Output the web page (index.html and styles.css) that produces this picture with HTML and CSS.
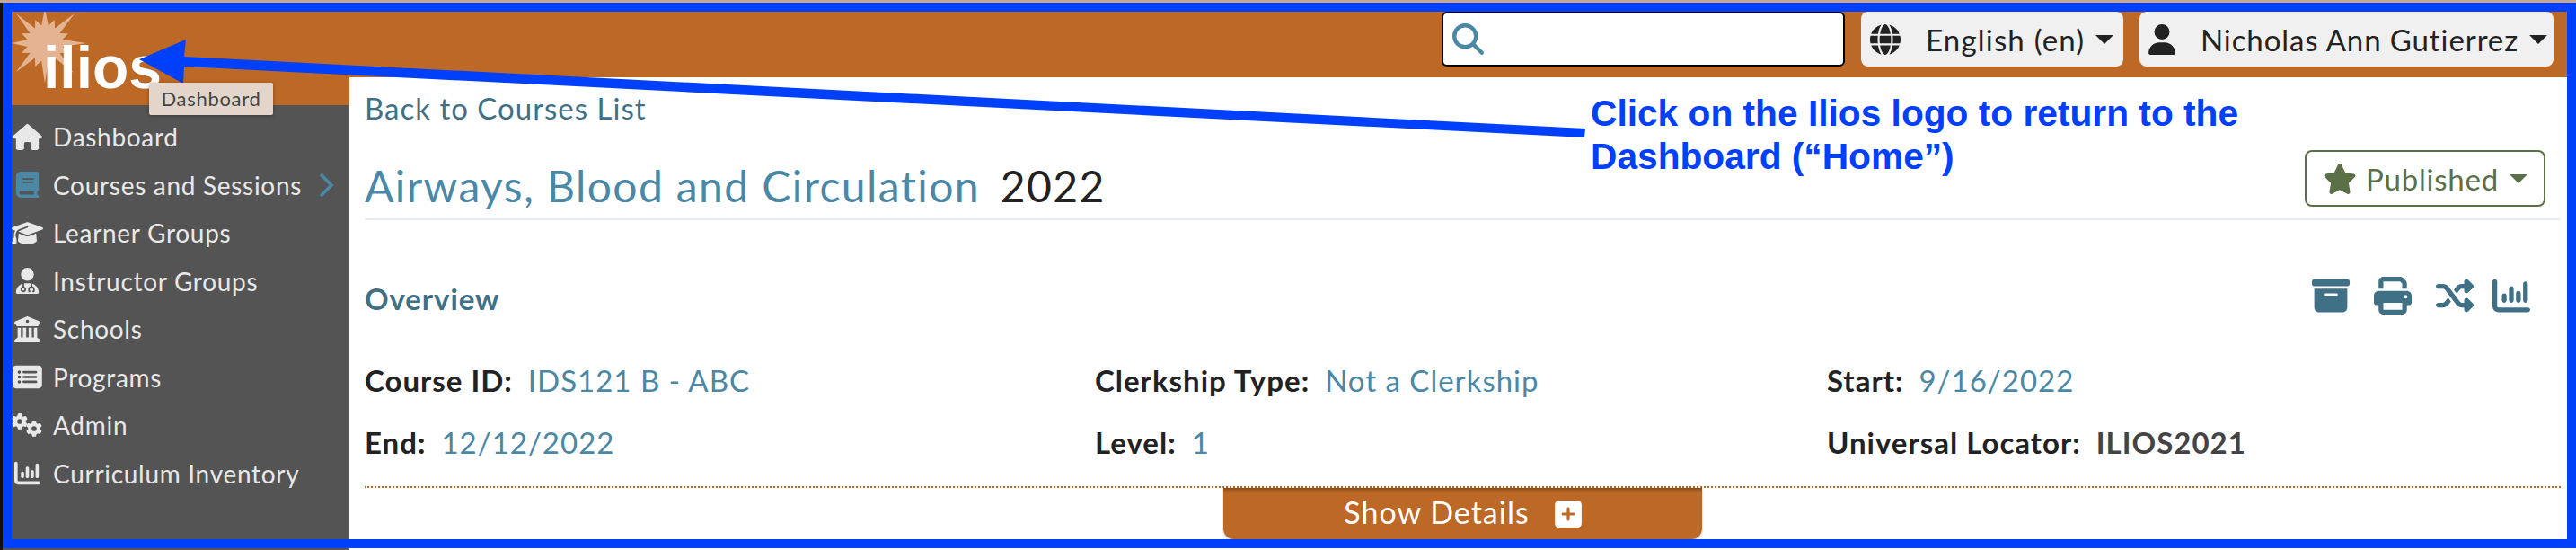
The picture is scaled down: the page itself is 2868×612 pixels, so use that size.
FILE: index.html
```html
<!DOCTYPE html>
<html lang="en">
<head>
<meta charset="utf-8">
<title>Ilios course overview</title>
<link rel="stylesheet" href="styles.css">
</head>
<body>
<div class="frame">
  <aside class="sidebar">
    <a class="logo">
      <svg class="sun" viewBox="-37 -35 90 90" aria-hidden="true"><path d="M46 0L19.6 3.9 25.9 10.7 16.6 11.1 32 33 11.1 16.6 10.7 25.9 3.9 19.6 0 45-3.9 19.6-10.7 25.9-11.1 16.6-32 32-16.6 11.1-25.9 10.7-19.6 3.9-37 0-19.6-3.9-25.9-10.7-16.6-11.1-32-33-11.1-16.6-10.7-25.9-3.9-19.6 0-38 3.9-19.6 10.7-25.9 11.1-16.6 33-33 16.6-11.1 25.9-10.7 19.6-3.9Z"/></svg>
      <span class="logo-text">ilios</span>
    </a>
    <div class="tooltip">Dashboard</div>
    <nav class="nav">
      <a class="nav-item"><svg class="nav-icon" viewBox="0 0 576 512"><path d="M575.8 255.5c0 18-15 32.1-32 32.1h-32l.7 160.2c0 2.7-.2 5.4-.5 8.1V472c0 22.1-17.9 40-40 40H456c-1.1 0-2.2 0-3.3-.1c-1.4 .1-2.8 .1-4.2 .1H416 392c-22.1 0-40-17.9-40-40V448 384c0-17.7-14.3-32-32-32H256c-17.7 0-32 14.3-32 32v64 24c0 22.1-17.9 40-40 40H160 128.1c-1.5 0-3-.1-4.5-.2c-1.2 .1-2.4 .2-3.6 .2H104c-22.1 0-40-17.9-40-40V360c0-.9 0-1.9 .1-2.8V287.6H32c-18 0-32-14-32-32.1c0-9 3-17 10-24L266.4 8c7-7 15-8 22-8s15 2 21 7L564.8 231.5c8 7 12 15 11 24z"/></svg>Dashboard</a>
      <a class="nav-item active"><svg class="nav-icon" viewBox="0 0 448 512"><path d="M96 0C43 0 0 43 0 96V416c0 53 43 96 96 96H384h32c17.7 0 32-14.3 32-32s-14.3-32-32-32V384c17.7 0 32-14.3 32-32V32c0-17.7-14.3-32-32-32H384 96zm0 384H352v64H96c-17.7 0-32-14.3-32-32s14.3-32 32-32zm32-240c0-8.8 7.2-16 16-16H336c8.8 0 16 7.2 16 16s-7.2 16-16 16H144c-8.8 0-16-7.2-16-16zm16 48H336c8.8 0 16 7.2 16 16s-7.2 16-16 16H144c-8.8 0-16-7.2-16-16s7.2-16 16-16z"/></svg>Courses and Sessions<svg class="chevron" viewBox="0 0 16 28"><path d="M2 2L14 14 2 26"/></svg></a>
      <a class="nav-item"><svg class="nav-icon" viewBox="0 0 640 512"><path d="M320 32c-8.1 0-16.1 1.4-23.7 4.1L15.8 137.4C6.3 140.9 0 149.9 0 160s6.3 19.1 15.8 22.6l57.9 20.9C57.3 229.3 48 259.8 48 291.9v28.1c0 28.4-10.8 57.7-22.3 80.8c-6.5 13-13.9 25.8-22.5 37.6C0 442.7-.9 448.3 .9 453.4s6 8.9 11.2 10.2l64 16c4.2 1.1 8.7 .3 12.4-2s6.3-6.1 7.1-10.4c8.6-42.8 4.3-81.2-2.1-108.7C90.3 344.3 86 329.8 80 316.5V291.9c0-30.2 10.2-58.7 27.9-81.5c12.9-15.5 29.6-28 49.2-35.7l157-61.7c8.2-3.2 17.5 .8 20.7 9s-.8 17.5-9 20.7l-157 61.7c-12.4 4.9-23.3 12.4-32.2 21.6l159.6 57.6c7.6 2.7 15.6 4.1 23.7 4.1s16.1-1.4 23.7-4.1L624.2 182.6c9.5-3.4 15.8-12.5 15.8-22.6s-6.3-19.1-15.8-22.6L343.7 36.1C336.1 33.4 328.1 32 320 32zM128 408c0 35.3 86 72 192 72s192-36.7 192-72L496.7 262.6 354.5 314c-11.1 4-22.8 6-34.5 6s-23.5-2-34.5-6L143.3 262.6 128 408z"/></svg>Learner Groups</a>
      <a class="nav-item"><svg class="nav-icon" viewBox="0 0 448 512"><path d="M224 256A128 128 0 1 0 224 0a128 128 0 1 0 0 256zm-96 55.2C54 332.9 0 401.3 0 482.3C0 498.7 13.3 512 29.7 512H418.3c16.4 0 29.7-13.3 29.7-29.7c0-81-54-149.4-128-171.1V362c27.6 7.1 48 32.2 48 62v40c0 8.8-7.2 16-16 16H336c-8.8 0-16-7.2-16-16s7.2-16 16-16V424c0-17.7-14.3-32-32-32s-32 14.3-32 32v24c8.8 0 16 7.2 16 16s-7.2 16-16 16H256c-8.8 0-16-7.2-16-16V424c0-29.8 20.4-54.9 48-62V304.9c-6-.6-12.1-.9-18.3-.9H178.3c-6.2 0-12.3 .3-18.3 .9v65.4c23.1 6.9 40 28.3 40 53.7c0 30.9-25.1 56-56 56s-56-25.1-56-56c0-25.4 16.9-46.8 40-53.7V311.2zM144 448a24 24 0 1 0 0-48 24 24 0 1 0 0 48z"/></svg>Instructor Groups</a>
      <a class="nav-item"><svg class="nav-icon" viewBox="0 0 512 512"><path d="M243.4 2.6l-224 96c-14 6-21.8 21-18.7 35.8S16.8 160 32 160v8c0 13.3 10.7 24 24 24H456c13.3 0 24-10.7 24-24v-8c15.2 0 28.3-10.7 31.3-25.6s-4.8-29.9-18.7-35.8l-224-96c-8-3.4-17.2-3.4-25.2 0zM128 224H64V420.3c-.6 .3-1.2 .7-1.8 1.1l-48 32c-11.7 7.8-17 22.4-12.9 35.9S17.9 512 32 512H480c14.1 0 26.5-9.2 30.6-22.7s-1.1-28.1-12.9-35.9l-48-32c-.6-.4-1.2-.7-1.8-1.1V224H384V416H344V224H280V416H232V224H168V416H128V224zM256 64a32 32 0 1 1 0 64 32 32 0 1 1 0-64z"/></svg>Schools</a>
      <a class="nav-item"><svg class="nav-icon" viewBox="0 0 576 512"><path fill-rule="evenodd" d="M64 32C28.7 32 0 60.7 0 96V416c0 35.3 28.7 64 64 64H512c35.3 0 64-28.7 64-64V96c0-35.3-28.7-64-64-64H64zM128 128a32 32 0 1 1 0 64 32 32 0 1 1 0-64zM128 224a32 32 0 1 1 0 64 32 32 0 1 1 0-64zM128 320a32 32 0 1 1 0 64 32 32 0 1 1 0-64zM216 136H456a24 24 0 0 1 0 48H216a24 24 0 0 1 0-48zM216 232H456a24 24 0 0 1 0 48H216a24 24 0 0 1 0-48zM216 328H456a24 24 0 0 1 0 48H216a24 24 0 0 1 0-48z"/></svg>Programs</a>
      <a class="nav-item"><svg class="nav-icon" viewBox="0 0 35 27"><path id="gear" transform="scale(.035)" d="M495.9 166.6c3.2 8.7 .5 18.4-6.4 24.6l-43.3 39.4c1.1 8.3 1.7 16.8 1.7 25.4s-.6 17.1-1.7 25.4l43.3 39.4c6.9 6.2 9.6 15.9 6.4 24.6c-4.4 11.9-9.7 23.3-15.8 34.3l-4.7 8.1c-6.6 11-14 21.4-22.1 31.2c-5.9 7.2-15.7 9.6-24.5 6.8l-55.7-17.7c-13.4 10.3-28.2 18.9-44 25.4l-12.5 57.1c-2 9.1-9 16.3-18.2 17.8c-13.8 2.3-28 3.5-42.5 3.5s-28.7-1.2-42.5-3.5c-9.2-1.5-16.2-8.7-18.2-17.8l-12.5-57.1c-15.8-6.5-30.6-15.1-44-25.4L83.1 425.9c-8.8 2.8-18.6 .3-24.5-6.8c-8.1-9.8-15.5-20.2-22.1-31.2l-4.7-8.1c-6.1-11-11.4-22.4-15.8-34.3c-3.2-8.7-.5-18.4 6.4-24.6l43.3-39.4C64.6 273.1 64 264.6 64 256s.6-17.1 1.7-25.4L22.4 191.2c-6.9-6.2-9.6-15.9-6.4-24.6c4.4-11.9 9.7-23.3 15.8-34.3l4.7-8.1c6.6-11 14-21.4 22.1-31.2c5.9-7.2 15.7-9.6 24.5-6.8l55.7 17.7c13.4-10.3 28.2-18.9 44-25.4l12.5-57.1c2-9.1 9-16.3 18.2-17.8C227.3 1.2 241.5 0 256 0s28.7 1.2 42.5 3.5c9.2 1.5 16.2 8.7 18.2 17.8l12.5 57.1c15.8 6.5 30.6 15.1 44 25.4l55.7-17.7c8.8-2.8 18.6-.3 24.5 6.8c8.1 9.8 15.5 20.2 22.1 31.2l4.7 8.1c6.1 11 11.4 22.4 15.8 34.3zM256 336a80 80 0 1 0 0-160 80 80 0 1 0 0 160z"/><use href="#gear" transform="translate(16 8)"/></svg>Admin</a>
      <a class="nav-item"><svg class="nav-icon" viewBox="0 0 512 512"><path d="M32 32c17.7 0 32 14.3 32 32V400c0 8.8 7.2 16 16 16H480c17.7 0 32 14.3 32 32s-14.3 32-32 32H80c-44.2 0-80-35.8-80-80V64C0 46.3 14.3 32 32 32zM160 224c17.7 0 32 14.3 32 32v64c0 17.7-14.3 32-32 32s-32-14.3-32-32V256c0-17.7 14.3-32 32-32zm128-64V320c0 17.7-14.3 32-32 32s-32-14.3-32-32V160c0-17.7 14.3-32 32-32s32 14.3 32 32zm64 32c17.7 0 32 14.3 32 32v96c0 17.7-14.3 32-32 32s-32-14.3-32-32V224c0-17.7 14.3-32 32-32zM480 96V320c0 17.7-14.3 32-32 32s-32-14.3-32-32V96c0-17.7 14.3-32 32-32s32 14.3 32 32z"/></svg>Curriculum Inventory</a>
    </nav>
  </aside>
  <div class="main">
    <header class="topbar">
      <div class="search"><svg class="search-icon" viewBox="0 0 512 512"><path d="M416 208c0 45.9-14.9 88.3-40 122.7L502.6 457.4c12.5 12.5 12.5 32.8 0 45.3s-32.8 12.5-45.3 0L330.7 376c-34.4 25.2-76.8 40-122.7 40C93.1 416 0 322.9 0 208S93.1 0 208 0S416 93.1 416 208zM208 352a144 144 0 1 0 0-288 144 144 0 1 0 0 288z"/></svg></div>
      <button class="menu-btn lang"><svg class="menu-icon globe" viewBox="0 0 512 512"><path d="M352 256c0 22.2-1.2 43.6-3.3 64H163.3c-2.2-20.4-3.3-41.8-3.3-64s1.2-43.6 3.3-64H348.7c2.2 20.4 3.3 41.8 3.3 64zm28.8-64H503.9c5.3 20.5 8.1 41.9 8.1 64s-2.8 43.5-8.1 64H380.8c2.1-20.6 3.2-42 3.2-64s-1.1-43.4-3.2-64zm112.6-32H376.7c-10-63.9-29.8-117.4-55.3-151.6c78.3 20.7 142 77.5 171.9 151.6zm-149.1 0H167.7c6.1-36.4 15.5-68.6 27-94.7c10.5-23.6 22.2-40.7 33.5-51.5C239.4 3.2 248.7 0 256 0s16.6 3.2 27.8 13.8c11.3 10.8 23 27.9 33.5 51.5c11.6 26 20.9 58.2 27 94.7zm-209 0H18.6C48.6 85.9 112.2 29.1 190.6 8.4C165.1 42.6 145.3 96.1 135.3 160zM8.1 192H131.2c-2.1 20.6-3.2 42-3.2 64s1.1 43.4 3.2 64H8.1C2.8 299.5 0 278.1 0 256s2.8-43.5 8.1-64zM194.7 446.6c-11.6-26-20.9-58.2-27-94.6H344.3c-6.1 36.4-15.5 68.6-27 94.6c-10.5 23.6-22.2 40.7-33.5 51.5C272.6 508.8 263.3 512 256 512s-16.6-3.2-27.8-13.8c-11.3-10.8-23-27.9-33.5-51.5zM135.3 352c10 63.9 29.8 117.4 55.3 151.6C112.2 482.9 48.6 426.1 18.6 352H135.3zm358.1 0c-30 74.1-93.6 130.9-171.9 151.6c25.5-34.2 45.2-87.7 55.3-151.6H493.4z"/></svg>English (en)<i class="caret"></i></button>
      <button class="menu-btn user"><svg class="menu-icon person" viewBox="0 0 448 512"><path d="M224 256A128 128 0 1 0 224 0a128 128 0 1 0 0 256zm-45.7 48C79.8 304 0 383.8 0 482.3C0 498.7 13.3 512 29.7 512H418.3c16.4 0 29.7-13.3 29.7-29.7C448 383.8 368.2 304 269.7 304H178.3z"/></svg>Nicholas Ann Gutierrez<i class="caret"></i></button>
    </header>
    <main class="content">
      <a class="back">Back to Courses List</a>
      <div class="title-row">
        <h1 class="title"><span class="course-name">Airways, Blood and Circulation</span> <span class="course-year">2022</span></h1>
        <button class="published"><svg class="star" viewBox="0 0 576 512"><path d="M316.9 18C311.6 7 300.4 0 288.1 0s-23.4 7-28.8 18L195 150.3 51.4 171.5c-12 1.8-22 10.2-25.7 21.7s-.7 24.2 7.9 32.7L137.8 329 113.2 474.7c-2 12 3 24.2 12.9 31.3s23 8 33.8 2.3l128.3-68.5 128.3 68.5c10.8 5.7 23.9 4.9 33.8-2.3s14.9-19.3 12.9-31.3L438.5 329 542.7 225.9c8.6-8.5 11.7-21.2 7.9-32.7s-13.7-19.9-25.7-21.7L381.2 150.3 316.9 18z"/></svg>Published<i class="caret"></i></button>
      </div>
      <div class="overview-row">
        <h2 class="overview">Overview</h2>
        <div class="actions">
          <svg class="action" viewBox="0 0 512 512"><path d="M32 32H480c17.7 0 32 14.3 32 32V96c0 17.7-14.3 32-32 32H32C14.3 128 0 113.7 0 96V64C0 46.3 14.3 32 32 32zm0 128H480V416c0 35.3-28.7 64-64 64H96c-35.3 0-64-28.7-64-64V160zm128 80c0 8.8 7.2 16 16 16H336c8.8 0 16-7.2 16-16s-7.2-16-16-16H176c-8.8 0-16 7.2-16 16z"/></svg>
          <svg class="action" viewBox="0 0 512 512"><path d="M128 0C92.7 0 64 28.7 64 64v96h64V64H354.7L384 93.3V160h64V93.3c0-17-6.7-33.3-18.7-45.3L400 18.7C388 6.7 371.7 0 354.7 0H128zM384 352v32 64H128V384 368 352H384zm64 32h32c17.7 0 32-14.3 32-32V256c0-35.3-28.7-64-64-64H64c-35.3 0-64 28.7-64 64v96c0 17.7 14.3 32 32 32H64v64c0 35.3 28.7 64 64 64H384c35.3 0 64-28.7 64-64V384zM432 248a24 24 0 1 1 0 48 24 24 0 1 1 0-48z"/></svg>
          <svg class="action" viewBox="0 0 512 512"><path d="M403.8 34.4c12-5 25.7-2.2 34.9 6.9l64 64c6 6 9.4 14.1 9.4 22.6s-3.4 16.6-9.4 22.6l-64 64c-9.2 9.2-22.9 11.9-34.9 6.9s-19.8-16.6-19.8-29.6V160H352c-10.1 0-19.6 4.7-25.6 12.8L284 229.3 244 176l31.2-41.6C293.3 110.2 321.8 96 352 96h32V64c0-12.9 7.8-24.6 19.8-29.6zM164 282.7L204 336l-31.2 41.6C154.7 401.8 126.2 416 96 416H32c-17.7 0-32-14.3-32-32s14.3-32 32-32H96c10.1 0 19.6-4.7 25.6-12.8L164 282.7zm274.6 188c-9.2 9.2-22.9 11.9-34.9 6.9s-19.8-16.6-19.8-29.6V416H352c-30.2 0-58.7-14.2-76.8-38.4L121.6 172.8c-6-8.1-15.5-12.8-25.6-12.8H32c-17.7 0-32-14.3-32-32s14.3-32 32-32H96c30.2 0 58.7 14.2 76.8 38.4L326.4 339.2c6 8.1 15.5 12.8 25.6 12.8h32V320c0-12.9 7.8-24.6 19.8-29.6s25.7-2.2 34.9 6.9l64 64c6 6 9.4 14.1 9.4 22.6s-3.4 16.6-9.4 22.6l-64 64z"/></svg>
          <svg class="action" viewBox="0 0 512 512"><path d="M32 32c17.7 0 32 14.3 32 32V400c0 8.8 7.2 16 16 16H480c17.7 0 32 14.3 32 32s-14.3 32-32 32H80c-44.2 0-80-35.8-80-80V64C0 46.3 14.3 32 32 32zM160 224c17.7 0 32 14.3 32 32v64c0 17.7-14.3 32-32 32s-32-14.3-32-32V256c0-17.7 14.3-32 32-32zm128-64V320c0 17.7-14.3 32-32 32s-32-14.3-32-32V160c0-17.7 14.3-32 32-32s32 14.3 32 32zm64 32c17.7 0 32 14.3 32 32v96c0 17.7-14.3 32-32 32s-32-14.3-32-32V224c0-17.7 14.3-32 32-32zM480 96V320c0 17.7-14.3 32-32 32s-32-14.3-32-32V96c0-17.7 14.3-32 32-32s32 14.3 32 32z"/></svg>
        </div>
      </div>
      <div class="details">
        <div class="field"><b>Course ID:</b><a>IDS121 B - ABC</a></div>
        <div class="field"><b>Clerkship Type:</b><a>Not a Clerkship</a></div>
        <div class="field"><b>Start:</b><a>9/16/2022</a></div>
        <div class="field"><b>End:</b><a>12/12/2022</a></div>
        <div class="field"><b>Level:</b><a>1</a></div>
        <div class="field"><b>Universal Locator:</b><span class="locator">ILIOS2021</span></div>
      </div>
      <div class="divider">
        <button class="show-details">Show Details<svg class="plus" viewBox="0 0 448 512"><path d="M64 32C28.7 32 0 60.7 0 96V416c0 35.3 28.7 64 64 64H384c35.3 0 64-28.7 64-64V96c0-35.3-28.7-64-64-64H64zM200 344V280H136c-13.3 0-24-10.7-24-24s10.7-24 24-24h64V168c0-13.3 10.7-24 24-24s24 10.7 24 24v64h64c13.3 0 24 10.7 24 24s-10.7 24-24 24H248v64c0 13.3-10.7 24-24 24s-24-10.7-24-24z"/></svg></button>
      </div>
    </main>
  </div>
</div>
<svg class="arrow" viewBox="0 0 2868 612" aria-hidden="true"><path d="M155 66L207 44 205 63 1765 143 1764 153 205 74 204 93Z"/></svg>
<p class="callout">Click on the Ilios logo to return to the<br>Dashboard (“Home”)</p>
</body>
</html>
```
FILE: styles.css
```css
* { box-sizing: border-box; }
html, body { margin: 0; padding: 0; }
body {
  width: 2868px;
  height: 612px;
  position: relative;
  overflow: hidden;
  font-family: "Lato", "Noto Sans", sans-serif;
  background:
    linear-gradient(#c9a78a, #c9a78a) 0 0 / 100% 3px no-repeat,
    linear-gradient(#111, #111) 0 0 / 3px 100% no-repeat,
    linear-gradient(#555, #555) 0 100% / 389px 3px no-repeat,
    #fff;
}
a { color: inherit; text-decoration: none; }
button { font-family: inherit; }

.frame {
  margin: 3px 0 0 3px;
  height: 607px;
  border: 10px solid #0040fa;
  display: flex;
  overflow: hidden;
  background: #fff;
}

/* sidebar */
.sidebar {
  width: 376px;
  flex: none;
  background: #545454;
  position: relative;
}
.logo {
  display: block;
  height: 104px;
  background: #bc6826;
  position: relative;
}
.sun {
  position: absolute;
  left: 0;
  top: 0;
  width: 90px;
  height: 90px;
  fill: #e4b391;
}
.logo-text {
  position: absolute;
  left: 35px;
  top: 24px;
  font: bold 66px/76px "Liberation Sans", sans-serif;
  color: #fff;
}
.tooltip {
  position: absolute;
  left: 153px;
  top: 79px;
  width: 138px;
  height: 36px;
  background: #e3d5ca;
  border-radius: 2px;
  box-shadow: 0 1px 4px rgba(0, 0, 0, .3);
  color: #444;
  font-size: 22px;
  letter-spacing: .7px;
  line-height: 36px;
  text-align: center;
  z-index: 2;
}
.nav { padding-top: 8.5px; }
.nav-item {
  display: flex;
  align-items: center;
  height: 53.5px;
  color: #e8e8e8;
  font-size: 28px;
  letter-spacing: .7px;
  position: relative;
}
.nav-item.active .nav-icon { fill: #4b88a6; }
.nav-icon {
  width: 35px;
  height: 29px;
  margin-right: 11px;
  fill: #e8e8e8;
  flex: none;
}
.chevron {
  width: 16px;
  height: 28px;
  margin-left: 19px;
  fill: none;
  stroke: #4b88a6;
  stroke-width: 3.5;
}

/* main column */
.main { flex: 1; display: flex; flex-direction: column; min-width: 0; }
.topbar {
  height: 73px;
  flex: none;
  background: #bc6826;
  display: flex;
  justify-content: flex-end;
  align-items: flex-start;
  padding-right: 15px;
}
.search {
  width: 449px;
  height: 61px;
  background: #fff;
  border: 2px solid #000;
  border-radius: 6px;
  margin-right: 18px;
  display: flex;
  align-items: center;
  padding-left: 10px;
}
.search-icon { width: 35px; height: 35px; fill: #4b88a6; }
.menu-btn {
  height: 61px;
  border: 0;
  border-radius: 8px;
  background: #f0f0f0;
  color: #222;
  font-size: 33px;
  letter-spacing: .9px;
  display: flex;
  align-items: center;
  padding: 0;
}
.lang { width: 292px; margin-right: 18px; letter-spacing: 1.2px; }
.user { width: 461px; }
.menu-icon { fill: #222; flex: none; }
.globe { width: 34px; height: 34px; margin: 0 28px 0 10px; }
.person { width: 30px; height: 34px; margin: 0 28px 0 10px; }
.caret {
  display: inline-block;
  border-style: solid;
  border-width: 10px 10px 0;
  border-color: currentColor transparent transparent;
  margin-left: 12px;
}

/* content */
.content { flex: 1; padding: 0 7px 0 17px; position: relative; }
.back { display: block; margin-top: 18px; font-size: 33px; letter-spacing: 1px; line-height: 32px; color: #3f7085; }
.title-row {
  display: flex;
  justify-content: space-between;
  align-items: center;
  height: 101px;
  border-bottom: 2px solid #e8ecef;
  padding-right: 17px;
  margin-top: 8px;
}
.title { margin: 26px 0 0; font-size: 48px; letter-spacing: 1.4px; font-weight: 400; line-height: 56px; }
.course-name { color: #4b88a6; }
.course-year { color: #222; margin-left: 9px; }
.published {
  width: 268px;
  height: 63px;
  margin-top: 10px;
  border: 2px solid #5c7048;
  border-radius: 8px;
  background: #fff;
  color: #5c7048;
  font-size: 33px;
  letter-spacing: .8px;
  display: flex;
  align-items: center;
  padding: 0 0 0 18px;
}
.star { width: 38px; height: 34px; fill: #5c7048; margin-right: 10px; }
.overview-row {
  display: flex;
  justify-content: space-between;
  align-items: center;
  margin-top: 65px;
  height: 44px;
  padding-right: 34px;
}
.overview { margin: 0; font-size: 33px; letter-spacing: .9px; font-weight: 700; color: #3f7085; }
.actions { display: flex; gap: 27px; margin-top: -6px; }
.action { width: 42px; height: 42px; fill: #3f7085; }
.action:last-child { margin-left: -6px; }
.details {
  display: grid;
  grid-template-columns: 813px 815px 1fr;
  grid-auto-rows: 69px;
  align-items: center;
  margin-top: 34.5px;
}
.field { font-size: 33px; letter-spacing: 1px; display: flex; gap: 17px; color: #222; }
.field a { color: #4b88a6; }
.locator { color: #444; font-weight: 700; }
.divider { border-top: 2px dotted #bc6826; margin-top: 14px; display: flex; justify-content: center; }
.show-details {
  width: 533px;
  height: 57px;
  background: #bc6826;
  color: #fff;
  border: 0;
  border-radius: 0 0 12px 12px;
  box-shadow: inset 0 6px 4px -4px rgba(0, 0, 0, .35), 0 2px 3px rgba(0, 0, 0, .2);
  font-size: 34px;
  letter-spacing: 1px;
  line-height: 54px;
  display: flex;
  align-items: center;
  justify-content: center;
  gap: 28px;
  padding-bottom: 3px;
}
.plus { width: 30px; height: 34px; fill: #fff; margin-top: 3px; }

/* annotation */
.arrow {
  position: absolute;
  left: 0;
  top: 0;
  width: 2868px;
  height: 612px;
  fill: #0040fa;
  pointer-events: none;
}
.callout {
  position: absolute;
  left: 1771px;
  top: 102px;
  margin: 0;
  font: bold 40.7px/48px "Liberation Sans", sans-serif;
  color: #0040fa;
}
```
